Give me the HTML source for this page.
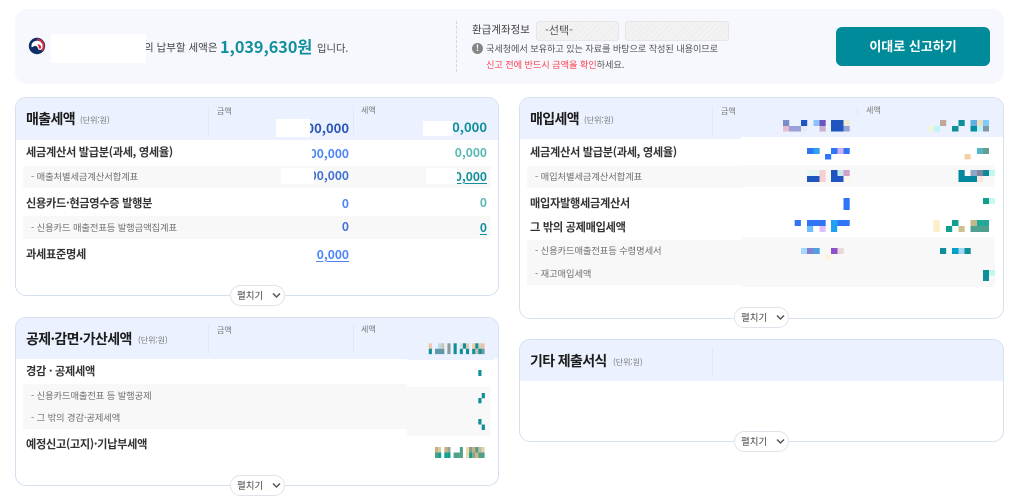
<!DOCTYPE html>
<html lang="ko">
<head>
<meta charset="utf-8">
<title>신고</title>
<style>
html,body{margin:0;padding:0;background:#fff;width:1024px;height:502px;overflow:hidden}
body{position:relative;font-family:"Noto Sans CJK KR","Liberation Sans",sans-serif;color:#222}
.a{position:absolute;box-sizing:border-box}
.t{position:absolute;white-space:nowrap;height:20px;line-height:20px;filter:blur(.3px)}
.card{position:absolute;box-sizing:border-box;border:1px solid #d6e0f0;border-radius:11px;background:#fff;overflow:hidden}
.head{position:absolute;left:0;right:0;top:0;background:#ebf1fe}
.ttl{font-size:14px;font-weight:700;color:#1c1c1c;letter-spacing:-.65px}
.unit{font-size:8px;color:#777}
.lbl{font-size:8px;color:#777}
.row{font-size:11.2px;font-weight:700;color:#333;letter-spacing:-.3px}
.sub{font-size:9.3px;color:#6f6f6f;letter-spacing:-.1px}
.gray{position:absolute;background:#f8f8f8}
.w{position:absolute;background:#fff}
.vl{position:absolute;width:1px;background:#e2e9f6}
.num{font-size:12px;font-weight:700;text-align:right}
.blue{color:#4c85f7}.dblue{color:#4470d2}.hblue{color:#2a55b5}
.teal{color:#128f9c}.lteal{color:#5ab8b0}
.u{text-decoration:underline;text-underline-offset:2px}
.pill{position:absolute;box-sizing:border-box;width:55px;height:21px;background:#fff;border:1px solid #dfe3ea;border-radius:11px;font-size:9.5px;color:#444;line-height:18px;padding-left:6px;white-space:nowrap}
.pill svg{position:absolute;left:41px;top:6px}
</style>
</head>
<body>
<!-- top bar -->
<div class="a" style="left:15px;top:9px;width:989px;height:75px;background:#f7f8fe;border-radius:12px"></div>
<svg class="a" style="left:28px;top:37px;filter:blur(.25px)" width="18" height="18" viewBox="0 0 18 18">
  <circle cx="9" cy="9" r="8.200" fill="#0f2f66"/>
  <path d="M3.500 10C3 6 6 3.500 9.500 3.800C13.500 4 15.500 8 14.500 11C13.500 13.500 10.500 13.500 10 11.500C9.500 9.500 8 8.500 6.500 9C5 9.500 4.500 10.500 3.500 10z" fill="#fff"/>
  <path d="M9 2.700C12.500 2.300 15.600 5 15.700 9C15.800 10.800 15 12.500 13.800 13.500" stroke="#e0283c" stroke-width="1.700" fill="none"/>
  <path d="M9.500 7.500C11 7 13 8 13.200 10C13.300 11 12.500 12 11.500 11.700C10.500 11.300 11 9 9.500 7.500z" fill="#e0283c"/>
</svg>
<div class="t" style="left:144px;top:38px;font-size:10.5px;color:#444">의 납부할 세액은</div>
<div class="w" style="left:51px;top:34px;width:95px;height:29px"></div>
<div class="t" style="left:220px;top:36px;font-size:16.200px;font-weight:700;color:#128f9c">1,039,630원</div>
<div class="t" style="left:317px;top:38px;font-size:10.300px;color:#444">입니다.</div>
<div class="a" style="left:456px;top:21px;height:51px;border-left:1px dashed #d5d5dc"></div>
<div class="t" style="left:472px;top:20px;font-size:10.500px;color:#444">환급계좌정보</div>
<div class="a" style="left:536px;top:21px;width:83px;height:20px;border:1px solid #e6e6e8;border-radius:3px;background:repeating-linear-gradient(135deg,#efefef 0 2px,#f3f3f3 2px 4px)"></div>
<div class="t" style="left:545px;top:20px;font-size:11px;color:#555">-선택-</div>
<div class="a" style="left:625px;top:21px;width:104px;height:20px;border:1px solid #e6e6e8;border-radius:3px;background:repeating-linear-gradient(135deg,#efefef 0 2px,#f3f3f3 2px 4px)"></div>
<div class="a" style="left:472px;top:43px;width:11px;height:11px;border-radius:50%;background:#868686;color:#fff;font-size:8.500px;font-weight:700;text-align:center;line-height:11px">!</div>
<div class="t" style="left:486px;top:38px;font-size:9.200px;color:#555;letter-spacing:-.1px">국세청에서 보유하고 있는 자료를 바탕으로 작성된 내용이므로</div>
<div class="t" style="left:486px;top:54px;font-size:9.200px;color:#555;letter-spacing:-.07px"><span style="color:#f9414f">신고 전에 반드시 금액을 확인</span>하세요.</div>
<div class="a" style="left:836px;top:27px;width:154px;height:39px;background:#008b9a;border-radius:6px;color:#fff;font-size:13px;font-weight:700;text-align:center;line-height:38px;filter:blur(.25px)">이대로 신고하기</div>

<!-- card 1 -->
<div class="card" style="left:15px;top:97px;width:484px;height:199px"><div class="head" style="height:42px"></div></div>
<div class="vl" style="left:208px;top:106px;height:29px"></div>
<div class="vl" style="left:353px;top:106px;height:29px"></div>
<div class="t ttl" style="left:26px;top:109px">매출세액</div>
<div class="t unit" style="left:80px;top:111px">(단위:원)</div>
<div class="t lbl" style="left:217px;top:102px">금액</div>
<div class="t lbl" style="left:361px;top:101px">세액</div>
<div class="gray" style="left:23px;top:166px;width:468px;height:22px"></div>
<div class="gray" style="left:23px;top:216px;width:468px;height:23px"></div>
<div class="t row" style="left:26px;top:142px">세금계산서 발급분(과세, 영세율)</div>
<div class="t sub" style="left:31px;top:166px">- 매출처별세금계산서합계표</div>
<div class="t row" style="left:26px;top:193px">신용카드·현금영수증 발행분</div>
<div class="t sub" style="left:31px;top:217px">- 신용카드 매출전표등 발행금액집계표</div>
<div class="t row" style="left:26px;top:244px">과세표준명세</div>
<div class="t num hblue" style="left:250px;width:99px;top:118px;font-size:13px">000,000</div>
<div class="t num teal" style="left:388px;width:99px;top:117px;font-size:13px">0,000</div>
<div class="t num blue" style="left:250px;width:99px;top:144px">000,000</div>
<div class="t num lteal" style="left:388px;width:99px;top:143px">0,000</div>
<div class="t num dblue" style="left:250px;width:99px;top:166px">000,000</div>
<div class="t num teal u" style="left:388px;width:99px;top:167px">0,000</div>
<div class="t num blue" style="left:250px;width:99px;top:194px">0</div>
<div class="t num lteal" style="left:388px;width:99px;top:193px">0</div>
<div class="t num dblue" style="left:250px;width:99px;top:217px">0</div>
<div class="t num teal u" style="left:388px;width:99px;top:218px">0</div>
<div class="t num blue u" style="left:250px;width:99px;top:245px">000,000</div>
<div class="w" style="left:276px;top:119px;width:34px;height:18px"></div>
<div class="w" style="left:423px;top:121px;width:30px;height:15px"></div>
<div class="w" style="left:250px;top:146px;width:62px;height:16px"></div>
<div class="w" style="left:281px;top:168px;width:33px;height:16px"></div>
<div class="w" style="left:426px;top:168px;width:31px;height:16px"></div>
<div class="w" style="left:250px;top:247px;width:66px;height:18px"></div>
<div class="gray" style="left:250px;top:168px;width:31px;height:16px"></div>
<div class="pill" style="left:230px;top:285px">펼치기<svg width="9" height="7" viewBox="0 0 9 7"><path d="M1 1.500L4.500 5L8 1.500" stroke="#555" stroke-width="1.500" fill="none"/></svg></div>

<!-- card 2 -->
<div class="card" style="left:519px;top:97px;width:485px;height:222px"><div class="head" style="height:41px"></div></div>
<div class="vl" style="left:712px;top:106px;height:29px"></div>
<div class="vl" style="left:857px;top:107px;height:9px"></div>
<div class="t ttl" style="left:530px;top:109px">매입세액</div>
<div class="t unit" style="left:584px;top:111px">(단위:원)</div>
<div class="t lbl" style="left:721px;top:102px">금액</div>
<div class="t lbl" style="left:866px;top:101px">세액</div>
<div class="w" style="left:741px;top:137px;width:262px;height:2px"></div>
<div class="gray" style="left:527px;top:166px;width:214px;height:22px"></div>
<div class="gray" style="left:741px;top:165px;width:254px;height:22px"></div>
<div class="gray" style="left:527px;top:240px;width:214px;height:45px"></div>
<div class="gray" style="left:741px;top:237px;width:254px;height:50px"></div>
<div class="t row" style="left:530px;top:142px">세금계산서 발급분(과세, 영세율)</div>
<div class="t sub" style="left:535px;top:166px">- 매입처별세금계산서합계표</div>
<div class="t row" style="left:530px;top:193px">매입자발행세금계산서</div>
<div class="t row" style="left:530px;top:217px">그 밖의 공제매입세액</div>
<div class="t sub" style="left:535px;top:240px">- 신용카드매출전표등 수령명세서</div>
<div class="t sub" style="left:535px;top:263px">- 재고매입세액</div>
<div class="pill" style="left:734px;top:307px">펼치기<svg width="9" height="7" viewBox="0 0 9 7"><path d="M1 1.500L4.500 5L8 1.500" stroke="#555" stroke-width="1.500" fill="none"/></svg></div>

<!-- card 3 -->
<div class="card" style="left:15px;top:317px;width:484px;height:169px"><div class="head" style="height:41px"></div></div>
<div class="a" style="left:407px;top:357px;width:87px;height:3px;background:#ebf1fe"></div>
<div class="vl" style="left:208px;top:325px;height:29px"></div>
<div class="vl" style="left:353px;top:325px;height:29px"></div>
<div class="t ttl" style="left:26px;top:329px">공제·감면·가산세액</div>
<div class="t unit" style="left:138px;top:331px">(단위:원)</div>
<div class="t lbl" style="left:217px;top:321px">금액</div>
<div class="t lbl" style="left:361px;top:320px">세액</div>
<div class="gray" style="left:23px;top:384px;width:384px;height:45px"></div>
<div class="gray" style="left:407px;top:387px;width:84px;height:49px"></div>
<div class="t row" style="left:26px;top:361px">경감 · 공제세액</div>
<div class="t sub" style="left:31px;top:385px">- 신용카드매출전표 등 발행공제</div>
<div class="t sub" style="left:31px;top:407px">- 그 밖의 경감·공제세액</div>
<div class="t row" style="left:26px;top:434px">예정신고(고지)·기납부세액</div>
<div class="pill" style="left:230px;top:475px">펼치기<svg width="9" height="7" viewBox="0 0 9 7"><path d="M1 1.500L4.500 5L8 1.500" stroke="#555" stroke-width="1.500" fill="none"/></svg></div>

<!-- card 4 -->
<div class="card" style="left:519px;top:339px;width:485px;height:103px"><div class="head" style="height:41px"></div></div>
<div class="vl" style="left:712px;top:348px;height:29px"></div>
<div class="t ttl" style="left:530px;top:351px">기타 제출서식</div>
<div class="t unit" style="left:613px;top:353px">(단위:원)</div>
<div class="pill" style="left:734px;top:431px">펼치기<svg width="9" height="7" viewBox="0 0 9 7"><path d="M1 1.500L4.500 5L8 1.500" stroke="#555" stroke-width="1.500" fill="none"/></svg></div>

<!-- mosaics -->
<svg class="a" style="left:0;top:0;filter:blur(.3px)" width="1024" height="502" viewBox="0 0 1024 502">
<rect x="783" y="120" width="6.200" height="6" fill="#7b8cc8"/><rect x="801" y="120" width="6.200" height="6" fill="#1f55c0"/><rect x="813.500" y="120" width="6.200" height="6" fill="#8cc4f5"/><rect x="819.500" y="120" width="6.200" height="6" fill="#6a55c0"/><rect x="831" y="120" width="12.600" height="6" fill="#1f55c0"/><rect x="843.500" y="120" width="6.200" height="6" fill="#f0e8d0"/>
<rect x="783" y="126" width="6.200" height="5.500" fill="#e8bcd0"/><rect x="789" y="126" width="12.400" height="5.500" fill="#9aa0d8"/><rect x="801" y="126" width="6.200" height="5.500" fill="#e5ebf5"/><rect x="819.500" y="126" width="6.200" height="5.500" fill="#c8b0d0"/><rect x="831" y="126" width="12.600" height="5.500" fill="#1f55c0"/><rect x="843.500" y="126" width="6.200" height="5.500" fill="#95a2d8"/>
<rect x="807" y="148" width="6.500" height="6" fill="#2f75f5"/><rect x="813.500" y="148" width="6.200" height="6" fill="#30a0f5"/><rect x="831" y="148" width="6.500" height="6" fill="#2f75f5"/><rect x="837.500" y="148" width="6.200" height="6" fill="#d0b0f5"/><rect x="843.500" y="148" width="6.200" height="6" fill="#2f75f5"/><rect x="825" y="154" width="6.200" height="5.500" fill="#2f75f5"/>
<rect x="807" y="170" width="12.500" height="6" fill="#e8f8f5"/><rect x="819.500" y="170" width="6.200" height="6" fill="#f5d0d0"/><rect x="831" y="170" width="6.500" height="6" fill="#1f55c0"/><rect x="837.500" y="170" width="6.200" height="6" fill="#c8e8f0"/><rect x="843.500" y="170" width="6.200" height="6" fill="#d0a0c8"/>
<rect x="807" y="176" width="12.500" height="6" fill="#1f55c0"/><rect x="819.500" y="176" width="6.200" height="6" fill="#f8d0d0"/><rect x="831" y="176" width="12.600" height="6" fill="#1f55c0"/><rect x="843.500" y="176" width="6.200" height="6" fill="#fbf5ea"/>
<rect x="843.500" y="198" width="6.200" height="12" fill="#2f75f5"/>
<rect x="794.700" y="220" width="6.200" height="6" fill="#2f75f5"/><rect x="807" y="220" width="18.700" height="6" fill="#2f75f5"/><rect x="831" y="220" width="6.500" height="6" fill="#1fa0f5"/><rect x="837.500" y="220" width="12.200" height="6" fill="#2f75f5"/>
<rect x="807" y="226" width="6.200" height="6" fill="#70bbf8"/><rect x="819.500" y="226" width="6.200" height="6" fill="#e0c0f8"/><rect x="831" y="226" width="6.200" height="6" fill="#1fa0f5"/>
<rect x="801" y="248" width="6.200" height="6" fill="#a8d8f8"/><rect x="807" y="248" width="6.500" height="6" fill="#8080d0"/><rect x="813.500" y="248" width="6.200" height="6" fill="#50a0e0"/><rect x="831" y="248" width="6.500" height="6" fill="#9050c8"/><rect x="837.500" y="248" width="6.200" height="6" fill="#e8d8d8"/><rect x="825" y="254" width="6.200" height="6" fill="#fbf5e0"/>
<rect x="940" y="120" width="6.200" height="6" fill="#c0a898"/><rect x="958.500" y="120" width="6.200" height="6" fill="#108f98"/><rect x="970.500" y="120" width="6.500" height="6" fill="#60b0e0"/><rect x="977" y="120" width="6.200" height="6" fill="#f0dcc0"/><rect x="983" y="120" width="6" height="6" fill="#80ccf8"/>
<rect x="927.500" y="126" width="6.500" height="5.500" fill="#eef5d8"/><rect x="934" y="126" width="6.200" height="5.500" fill="#c0f5f8"/><rect x="952" y="126" width="6.500" height="5.500" fill="#108f98"/><rect x="970.500" y="126" width="6.500" height="5.500" fill="#0090a0"/><rect x="977" y="126" width="6.200" height="5.500" fill="#c0f0f8"/><rect x="983" y="126" width="6" height="5.500" fill="#8098a0"/>
<rect x="977" y="148" width="6.200" height="6" fill="#50b8c8"/><rect x="983" y="148" width="6" height="6" fill="#60a090"/><rect x="964.500" y="154" width="6.200" height="5.500" fill="#f8d0a8"/>
<rect x="958.500" y="170" width="6.200" height="6" fill="#0088a0"/><rect x="970.500" y="170" width="6.500" height="6" fill="#90a8c8"/><rect x="977" y="170" width="6.200" height="6" fill="#8088a0"/><rect x="983" y="170" width="6" height="6" fill="#108898"/><rect x="989" y="170" width="6" height="6" fill="#c0f8f0"/>
<rect x="958.500" y="176" width="18.500" height="6" fill="#0088a0"/><rect x="977" y="176" width="6.200" height="6" fill="#fbe8d8"/>
<rect x="983" y="198" width="6" height="6" fill="#10a090"/><rect x="989" y="198" width="6" height="6" fill="#c8f8f0"/>
<rect x="933.500" y="220" width="6.200" height="12" fill="#fdeec8"/><rect x="952" y="220" width="6.500" height="6" fill="#10a090"/><rect x="970.500" y="220" width="6.500" height="6" fill="#c0b888"/><rect x="977" y="220" width="12" height="6" fill="#20a898"/>
<rect x="946" y="226" width="6.200" height="6" fill="#10a090"/><rect x="958.500" y="226" width="6.200" height="6" fill="#d0c090"/><rect x="970.500" y="226" width="18.500" height="6" fill="#50a090"/>
<rect x="940" y="248" width="6.200" height="6" fill="#108f98"/><rect x="952" y="248" width="6.500" height="6" fill="#00a0c8"/><rect x="958.500" y="248" width="6.200" height="6" fill="#a0d8f0"/><rect x="964.500" y="248" width="6.200" height="6" fill="#108f98"/>
<rect x="983" y="270" width="6" height="11" fill="#108f98"/><rect x="989" y="270" width="6" height="5.500" fill="#c0f8f0"/>
<!-- card 3 header mosaic -->
<rect x="428.800" y="343.300" width="3.100" height="5.400" fill="#f0c8a8"/><rect x="428.800" y="348.700" width="3.100" height="5.400" fill="#108f98"/>
<rect x="435" y="348.700" width="9.300" height="5.400" fill="#6098a8"/><rect x="438.100" y="343.300" width="3.100" height="5.400" fill="#a8e0f8"/><rect x="441.200" y="343.300" width="3.100" height="5.400" fill="#d8c0a8"/>
<rect x="447.400" y="343.300" width="3.100" height="10.800" fill="#8a9aa0"/>
<rect x="453.600" y="343.300" width="3.100" height="10.800" fill="#108f98"/>
<rect x="459.800" y="348.700" width="3.100" height="5.400" fill="#108f98"/><rect x="459.800" y="343.300" width="3.100" height="5.400" fill="#d8e0e0"/><rect x="462.900" y="343.300" width="3.100" height="5.400" fill="#108f98"/><rect x="466" y="348.700" width="3.100" height="5.400" fill="#108f98"/><rect x="466" y="343.300" width="3.100" height="5.400" fill="#e0c8b0"/>
<rect x="472.200" y="348.700" width="3.100" height="5.400" fill="#108f98"/><rect x="472.200" y="343.300" width="3.100" height="5.400" fill="#f0c8a8"/><rect x="475.300" y="343.300" width="3.100" height="5.400" fill="#108f98"/><rect x="475.300" y="348.700" width="3.100" height="5.400" fill="#c0c0a8"/><rect x="478.400" y="343.300" width="3.100" height="5.400" fill="#d0d0c0"/><rect x="478.400" y="348.700" width="3.100" height="5.400" fill="#108f98"/><rect x="481.500" y="343.300" width="3.100" height="5.400" fill="#f0c0a8"/><rect x="481.500" y="348.700" width="3.100" height="5.400" fill="#709aa0"/>
<!-- card 3 rows -->
<rect x="478.300" y="370" width="3.200" height="6" fill="#108f98"/>
<rect x="481.700" y="393" width="3.200" height="5.300" fill="#108f98"/><rect x="478.300" y="398" width="3.200" height="5.300" fill="#108f98"/>
<rect x="478.300" y="419" width="3.200" height="5.500" fill="#108f98"/><rect x="481.700" y="424.500" width="3.200" height="5.500" fill="#108f98"/>
<!-- card 3 bottom -->
<rect x="435" y="447" width="3.100" height="5.500" fill="#c8b080"/><rect x="435" y="452.500" width="3.100" height="5.500" fill="#4f9f88"/>
<rect x="438.100" y="447" width="3.100" height="5.500" fill="#d8c8a0"/><rect x="438.100" y="452.500" width="3.100" height="5.500" fill="#10a090"/>
<rect x="444.300" y="447" width="3.100" height="5.500" fill="#c8b080"/><rect x="444.300" y="452.500" width="3.100" height="5.500" fill="#10a090"/>
<rect x="447.400" y="447" width="3.100" height="5.500" fill="#90a890"/><rect x="447.400" y="452.500" width="3.100" height="5.500" fill="#10a090"/>
<rect x="453.600" y="452.500" width="6.200" height="5.500" fill="#50a088"/><rect x="459.800" y="447" width="3.100" height="11" fill="#50a088"/>
<rect x="466" y="447" width="3.100" height="11" fill="#f0d8b0"/>
<rect x="469.100" y="447" width="3.100" height="5.500" fill="#80a088"/><rect x="469.100" y="452.500" width="3.100" height="5.500" fill="#10a090"/>
<rect x="472.200" y="447" width="3.100" height="5.500" fill="#c0b080"/><rect x="472.200" y="452.500" width="3.100" height="5.500" fill="#90a080"/>
<rect x="475.300" y="447" width="3.100" height="5.500" fill="#509888"/><rect x="475.300" y="452.500" width="3.100" height="5.500" fill="#c8b888"/>
<rect x="478.400" y="447" width="3.100" height="5.500" fill="#c0c0a0"/><rect x="478.400" y="452.500" width="3.100" height="5.500" fill="#50a088"/>
<rect x="481.500" y="447" width="3.100" height="5.500" fill="#e0d0b0"/><rect x="481.500" y="452.500" width="3.100" height="5.500" fill="#50a088"/>
</svg>
</body>
</html>
